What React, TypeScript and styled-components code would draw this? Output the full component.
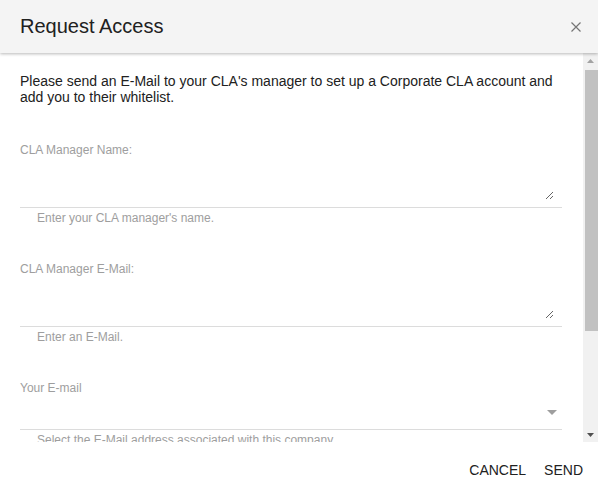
import React from 'react';
import styled, { createGlobalStyle } from 'styled-components';

const GlobalStyle = createGlobalStyle`
  html, body {
    margin: 0;
    padding: 0;
    background: #ffffff;
  }
  body {
    font-family: "Liberation Sans", Arial, sans-serif;
  }
`;

const Dialog = styled.div`
  display: flex;
  flex-direction: column;
  height: 100vh;
  background: #fff;
`;

const Header = styled.header`
  position: relative;
  z-index: 1;
  flex: 0 0 53px;
  display: flex;
  align-items: center;
  justify-content: space-between;
  padding: 0 17px 0 20px;
  background: #f4f4f4;
  box-shadow: 0 1px 3px rgba(0, 0, 0, 0.28);
`;

const Title = styled.h2`
  margin: 0;
  font-size: 20px;
  font-weight: 400;
  color: #212121;
`;

const CloseButton = styled.button`
  display: flex;
  align-items: center;
  justify-content: center;
  width: 10px;
  height: 10px;
  padding: 0;
  border: none;
  background: none;
  cursor: pointer;
`;

const Body = styled.div`
  flex: 1 1 auto;
  min-height: 0;
  display: flex;
`;

const Content = styled.div`
  flex: 1 1 auto;
  min-width: 0;
  overflow: hidden;
  padding: 20px 21px 0 20px;
`;

// the dialog body's scrollbar, drawn in its own column
const ScrollBar = styled.div`
  flex: 0 0 15px;
  display: flex;
  flex-direction: column;
  background: #f1f1f1;
`;

const ScrollArrow = styled.div`
  flex: 0 0 15px;
  display: flex;
  align-items: center;
  justify-content: center;
`;

const ScrollTrack = styled.div`
  flex: 1 1 auto;
  padding-top: 2px;
`;

const ScrollThumb = styled.div`
  height: 261px;
  margin-left: 2px;
  background: #c1c1c1;
`;

const Intro = styled.p`
  margin: 0 0 38px;
  font-size: 14px;
  line-height: 16px;
  color: #212121;
`;

const Field = styled.div`
  margin-bottom: 37px;
`;

const Label = styled.label`
  display: block;
  font-size: 12px;
  line-height: 14px;
  color: #9e9e9e;
`;

const TextAreaWrap = styled.div`
  padding: 0 8px 7px 0;
  border-bottom: 1px solid #dcdcdc;
`;

const TextArea = styled.textarea`
  display: block;
  box-sizing: border-box;
  width: 100%;
  height: 43px;
  padding: 4px 0;
  border: none;
  outline: none;
  resize: vertical;
  font-family: "Liberation Sans", Arial, sans-serif;
  font-size: 14px;
  color: #212121;
  background: transparent;
`;

const SelectBox = styled.div`
  display: flex;
  align-items: center;
  justify-content: flex-end;
  height: 34px;
  padding-right: 5px;
  border-bottom: 1px solid #dcdcdc;
  cursor: pointer;
`;

const Hint = styled.div`
  margin-top: 3px;
  padding-left: 17px;
  font-size: 12px;
  line-height: 14px;
  color: #9e9e9e;
  white-space: nowrap;
`;

const Footer = styled.footer`
  flex: 0 0 55px;
  display: flex;
  align-items: center;
  justify-content: flex-end;
  padding-right: 6px;
`;

const ActionButton = styled.button`
  padding: 8px 9px;
  border: none;
  background: none;
  font-family: "Liberation Sans", Arial, sans-serif;
  font-size: 14px;
  text-transform: uppercase;
  color: #212121;
  cursor: pointer;
`;

const CloseIcon = () => (
  <svg width="10" height="10" viewBox="0 0 10 10">
    <path d="M0.5 0.5 L9.5 9.5 M9.5 0.5 L0.5 9.5" stroke="#757575" strokeWidth="1.2" fill="none" />
  </svg>
);

const Caret = () => (
  <svg width="10" height="5" viewBox="0 0 10 5">
    <path d="M0 0 L10 0 L5 5 Z" fill="#9e9e9e" />
  </svg>
);

const Triangle = ({ up, color }: { up?: boolean; color: string }) => (
  <svg width="7" height="4" viewBox="0 0 7 4">
    <path d={up ? 'M0 4 L7 4 L3.5 0 Z' : 'M0 0 L7 0 L3.5 4 Z'} fill={color} />
  </svg>
);

export default function App() {
  return (
    <>
      <GlobalStyle />
      <Dialog>
        <Header>
          <Title>Request Access</Title>
          <CloseButton aria-label="Close">
            <CloseIcon />
          </CloseButton>
        </Header>
        <Body>
          <Content>
            <Intro>
              Please send an E-Mail to your CLA's manager to set up a Corporate CLA account and
              add you to their whitelist.
            </Intro>
            <Field>
              <Label>CLA Manager Name:</Label>
              <TextAreaWrap>
                <TextArea />
              </TextAreaWrap>
              <Hint>Enter your CLA manager's name.</Hint>
            </Field>
            <Field>
              <Label>CLA Manager E-Mail:</Label>
              <TextAreaWrap>
                <TextArea />
              </TextAreaWrap>
              <Hint>Enter an E-Mail.</Hint>
            </Field>
            <Field>
              <Label>Your E-mail</Label>
              <SelectBox>
                <Caret />
              </SelectBox>
              <Hint>Select the E-Mail address associated with this company</Hint>
            </Field>
          </Content>
          <ScrollBar>
            <ScrollArrow>
              <Triangle up color="#a3a3a3" />
            </ScrollArrow>
            <ScrollTrack>
              <ScrollThumb />
            </ScrollTrack>
            <ScrollArrow>
              <Triangle color="#505050" />
            </ScrollArrow>
          </ScrollBar>
        </Body>
        <Footer>
          <ActionButton>Cancel</ActionButton>
          <ActionButton>Send</ActionButton>
        </Footer>
      </Dialog>
    </>
  );
}
